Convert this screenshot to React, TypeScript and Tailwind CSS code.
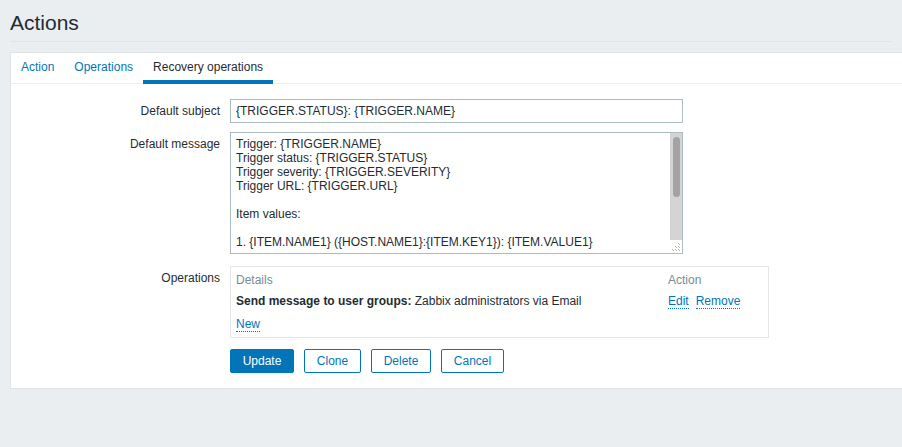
import type { JSX } from 'react'

const FONT = { fontFamily: '"Liberation Sans", Arial, sans-serif' }

const tabs = [
  { id: 'action', label: 'Action' },
  { id: 'operations', label: 'Operations' },
  { id: 'recovery', label: 'Recovery operations' }
]

const defaultMessage = `Trigger: {TRIGGER.NAME}
Trigger status: {TRIGGER.STATUS}
Trigger severity: {TRIGGER.SEVERITY}
Trigger URL: {TRIGGER.URL}

Item values:

1. {ITEM.NAME1} ({HOST.NAME1}:{ITEM.KEY1}): {ITEM.VALUE1}
2. {ITEM.NAME2} ({HOST.NAME2}:{ITEM.KEY2}): {ITEM.VALUE2}
3. {ITEM.NAME3} ({HOST.NAME3}:{ITEM.KEY3}): {ITEM.VALUE3}

Original event ID: {EVENT.ID}`

const FormLabel = ({ children }: { children: string }): JSX.Element => (
  <div className="w-[209px] shrink-0 pt-[5px] text-right leading-[14px] text-[#1f2c33]">
    {children}
  </div>
)

const LinkText = ({ children }: { children: string }): JSX.Element => (
  <a className="cursor-pointer border-b border-dotted border-[#0275b8] text-[#0275b8]">
    {children}
  </a>
)

const Button = ({
  label,
  width,
  primary
}: {
  label: string
  width: string
  primary?: boolean
}): JSX.Element => (
  <button
    className={`${width} h-[24px] rounded-[2px] border border-[#0275b8] leading-[22px] ${
      primary ? 'bg-[#0275b8] text-white' : 'bg-white text-[#0275b8]'
    }`}
  >
    {label}
  </button>
)

// resize grip in the textarea corner
const ResizeGrip = (): JSX.Element => (
  <svg width="10" height="10" viewBox="0 0 10 10" className="block">
    {[
      [7, 1],
      [4, 4],
      [7, 4],
      [1, 7],
      [4, 7],
      [7, 7]
    ].map(([x, y]) => (
      <g key={`${x}-${y}`} fill="#b5b5b5">
        <rect x={x} y={y} width="1" height="1" />
        <rect x={x + 1} y={y + 1} width="1" height="1" />
      </g>
    ))}
  </svg>
)

const App = (): JSX.Element => {
  const activeTab = 'recovery'

  return (
    <div className="min-h-[447px] w-full overflow-hidden bg-[#ebeef0] text-[12px]" style={FONT}>
      <div className="mx-[10px] border-b border-[#dfe4e7] pt-[11px] pb-[6px]">
        <h1 className="text-[21px] leading-[24px] text-[#1f2c33]">Actions</h1>
      </div>

      <div className="mt-[10px] ml-[10px] border-y border-l border-[#dfe4e7] bg-white pb-[15px]">
        <div className="flex h-[31px] border-b border-[#ebeef0]">
          {tabs.map((tab) => (
            <div
              key={tab.id}
              className={`-mb-px flex h-[31px] items-center border-b-4 px-[10px] ${
                tab.id === activeTab
                  ? 'border-[#0275b8] text-[#1f2c33]'
                  : 'border-transparent text-[#0275b8]'
              }`}
            >
              {tab.label}
            </div>
          ))}
        </div>

        <div className="flex flex-col">
          <div className="mt-[15px] flex gap-[10px]">
            <FormLabel>Default subject</FormLabel>
            <input
              readOnly
              value="{TRIGGER.STATUS}: {TRIGGER.NAME}"
              className="h-[24px] w-[453px] border border-[#acbbc2] px-[5px] text-[12px] text-[#1f2c33] outline-none"
            />
          </div>

          <div className="mt-[9px] flex gap-[10px]">
            <FormLabel>Default message</FormLabel>
            <div className="relative h-[122px] w-[453px] border border-[#acbbc2]">
              <textarea
                readOnly
                value={defaultMessage}
                className="block h-[116px] w-full resize-none overflow-hidden pt-[4px] pr-[17px] pb-0 pl-[5px] text-[12px] leading-[14px] whitespace-pre text-[#1f2c33] outline-none"
              />
              <div className="absolute top-0 right-0 h-[107px] w-[12px] bg-[#d4d4d4] pt-[4px]">
                <div className="mx-auto h-[60px] w-[7px] rounded-full bg-[#a3a3a3]" />
              </div>
              <div className="absolute right-0 bottom-0 flex h-[13px] w-[12px] items-end justify-end bg-white pr-[1px] pb-[1px]">
                <ResizeGrip />
              </div>
            </div>
          </div>

          <div className="mt-[12px] flex gap-[10px]">
            <FormLabel>Operations</FormLabel>
            <div className="w-[539px] border border-[#e3e7ea] pt-[6px] pb-[6px] leading-[14px] text-[#1f2c33]">
              <div className="grid grid-cols-[1fr_105px]">
                <div className="px-[5px] text-[#768d99]">Details</div>
                <div className="px-[5px] text-[#768d99]">Action</div>
                <div className="mt-[7px] px-[5px]">
                  <span className="font-bold">Send message to user groups:</span> Zabbix
                  administrators via Email
                </div>
                <div className="mt-[7px] flex gap-[7px] px-[5px]">
                  <LinkText>Edit</LinkText>
                  <LinkText>Remove</LinkText>
                </div>
              </div>
              <div className="mt-[8px] px-[5px]">
                <LinkText>New</LinkText>
              </div>
            </div>
          </div>

          <div className="mt-[11px] flex gap-[10px] pl-[219px]">
            <Button label="Update" width="w-[64px]" primary />
            <Button label="Clone" width="w-[57px]" />
            <Button label="Delete" width="w-[60px]" />
            <Button label="Cancel" width="w-[63px]" />
          </div>
        </div>
      </div>
    </div>
  )
}

export default App
